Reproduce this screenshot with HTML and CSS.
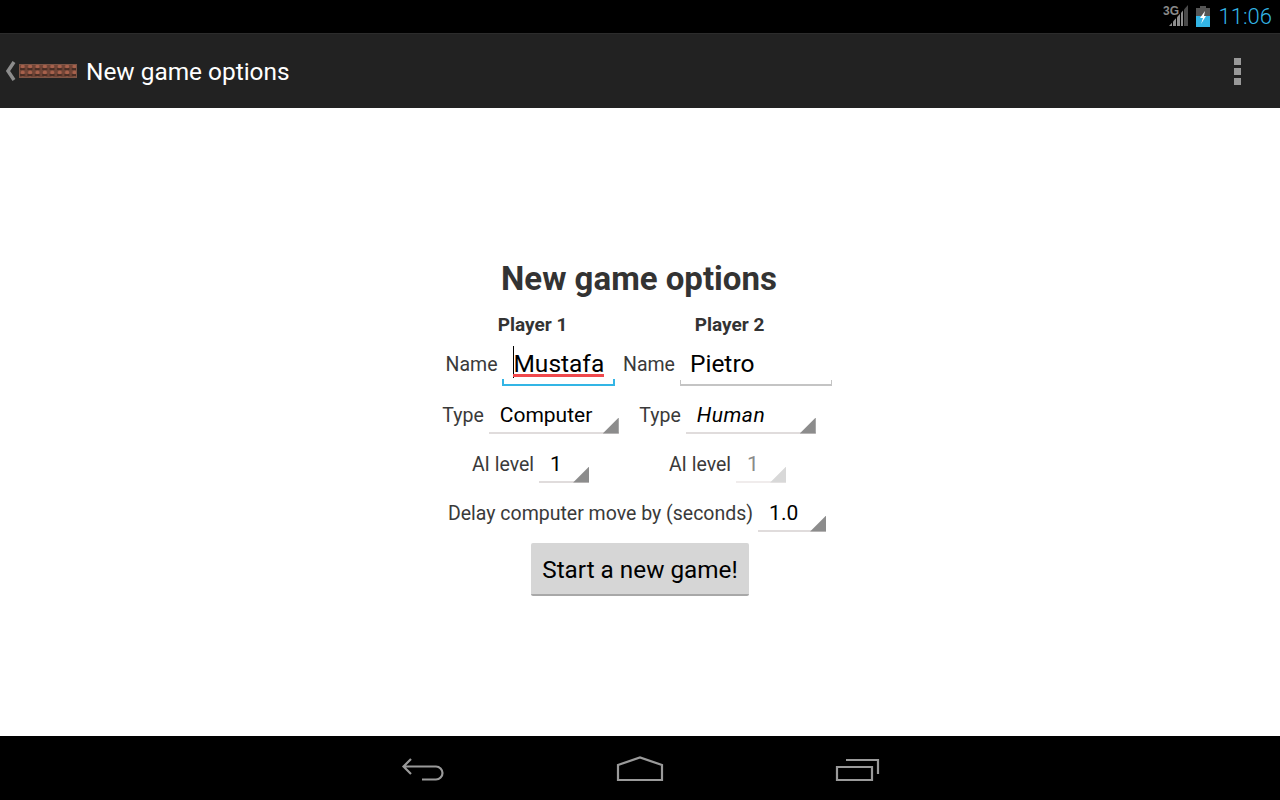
FILE: index.html
```html
<!DOCTYPE html>
<html lang="en">
<head>
    <meta charset="UTF-8">
    <title>New game options</title>
    <link rel="stylesheet" href="styles.css">
</head>
<body>
    <div class="status-bar">
        <svg class="signal-icon" width="26" height="25" viewBox="0 0 26 25">
            <text x="0" y="11" class="signal-label">3G</text>
            <polygon points="6,22 9,18.700 9,22" fill="#8f8f8f"/>
            <polygon points="10,22 10,17.600 13,14.300 13,22" fill="#8f8f8f"/>
            <polygon points="14,22 14,13.200 17,9.800 17,22" fill="#8f8f8f"/>
            <polygon points="18,22 18,8.700 20,6.500 20,22" fill="#8f8f8f"/>
            <polygon points="21,22 21,5.400 25,1 25,22" fill="#4a4a4a"/>
        </svg>
        <svg class="battery-icon" width="14" height="21" viewBox="0 0 14 21">
            <rect x="4" y="0" width="6" height="2" fill="#555"/>
            <rect x="0" y="2" width="14" height="8" fill="#555"/>
            <rect x="0" y="10" width="14" height="11" fill="#33b5e5"/>
            <polygon points="9,5 4,12 7,12 5,18 10,10 8,10" fill="#fff"/>
        </svg>
        <span class="clock">11:06</span>
    </div>

    <div class="action-bar">
        <svg class="up-icon" width="11" height="20" viewBox="0 0 11 20">
            <polyline points="9,1 3,10 9,19" fill="none" stroke="#8c8c8c" stroke-width="3.500"/>
        </svg>
        <svg class="brick-icon" width="58" height="14" viewBox="0 0 58 14">
            <defs>
                <pattern id="bricks" width="7.400" height="6" patternUnits="userSpaceOnUse">
                    <rect width="7.400" height="6" fill="#6f4436"/>
                    <circle cx="3.700" cy="2.400" r="2" fill="#a8614c"/>
                    <rect x="1" y="4.400" width="5" height="1.200" fill="#2d1d18"/>
                </pattern>
            </defs>
            <rect width="58" height="14" fill="#7d5546"/>
            <rect x="1" y="1" width="56" height="12" fill="url(#bricks)"/>
        </svg>
        <span class="action-title">New game options</span>
        <div class="overflow-menu">
            <span class="overflow-dot"></span>
            <span class="overflow-dot"></span>
            <span class="overflow-dot"></span>
        </div>
    </div>

    <div class="content">
        <h1 class="form-title">New game options</h1>

        <div class="players">
            <div class="player-head">Player 1</div>
            <div class="player-head">Player 2</div>

            <div class="field name-field">
                <label class="field-label">Name</label>
                <div class="text-input focused narrow">
                    <span class="typed"><span class="misspelled">Mustafa</span></span>
                </div>
            </div>
            <div class="field name-field">
                <label class="field-label">Name</label>
                <div class="text-input wide">Pietro</div>
            </div>

            <div class="field">
                <label class="field-label">Type</label>
                <div class="spinner type-spinner">Computer</div>
            </div>
            <div class="field">
                <label class="field-label">Type</label>
                <div class="spinner type-spinner human">Human</div>
            </div>

            <div class="field">
                <label class="field-label">AI level</label>
                <div class="spinner level-spinner">1</div>
            </div>
            <div class="field">
                <label class="field-label">AI level</label>
                <div class="spinner level-spinner disabled">1</div>
            </div>
        </div>

        <div class="field delay-field">
            <label class="field-label">Delay computer move by (seconds)</label>
            <div class="spinner delay-spinner">1.0</div>
        </div>

        <button class="start-button">Start a new game!</button>
    </div>

    <div class="nav-bar">
        <svg width="48" height="28" viewBox="0 0 48 28">
            <path d="M11 5 L3.500 12.500 L11 20 M3.500 12.500 H36 A6.500 6.500 0 0 1 36 25.500 H22" fill="none" stroke="#9a9a9a" stroke-width="2.200"/>
        </svg>
        <svg width="48" height="28" viewBox="0 0 48 28">
            <path d="M2 26 V11 L24 3.500 L46 11 V26 Z" fill="none" stroke="#9a9a9a" stroke-width="2.200"/>
        </svg>
        <svg width="48" height="28" viewBox="0 0 48 28">
            <path d="M14 6 H46 V20 M5 13 H40 V26 H5 Z" fill="none" stroke="#9a9a9a" stroke-width="2.200"/>
        </svg>
    </div>
</body>
</html>
```

FILE: styles.css
```css
body {
    margin: 0;
    width: 1280px;
    height: 800px;
    display: flex;
    flex-direction: column;
    overflow: hidden;
    background: #fff;
    font-family: Roboto, sans-serif;
}

/* Top bars */
.status-bar {
    height: 33px;
    background: #000;
    display: flex;
    align-items: center;
    justify-content: flex-end;
    padding-right: 8px;
    border-bottom: 1px solid #2c2c2c;
}

.signal-icon {
    margin-right: 7px;
}

.signal-label {
    font-family: "Liberation Sans", sans-serif;
    font-size: 12px;
    font-weight: 700;
    fill: #8a8a8a;
}

.battery-icon {
    margin-right: 9px;
    margin-top: -1px;
}

.clock {
    color: #33b5e5;
    font-size: 22px;
    font-weight: 300;
}

.action-bar {
    height: 74px;
    background: #222;
    display: flex;
    align-items: center;
    color: #fff;
}

.up-icon {
    margin-left: 5px;
}

.brick-icon {
    margin-left: 3px;
}

.action-title {
    margin-left: 9px;
    margin-top: 1px;
    font-size: 24.400px;
}

.overflow-menu {
    margin-left: auto;
    margin-right: 39px;
    display: flex;
    flex-direction: column;
    gap: 3px;
}

.overflow-dot {
    width: 7px;
    height: 7px;
    background: #999;
}

/* Form */
.content {
    flex: 1;
    display: flex;
    flex-direction: column;
    align-items: center;
    padding-top: 152px;
    color: #333;
}

.form-title {
    margin: 0 2px 0 0;
    font-size: 33px;
    font-weight: 700;
    line-height: 38px;
}

.players {
    display: grid;
    grid-template-columns: 185px 209px;
    margin-right: 10px;
    margin-top: 14px;
}

.player-head {
    font-size: 19px;
    font-weight: 700;
    text-align: center;
    height: 28px;
    line-height: 26px;
    padding-left: 4px;
}

.field {
    display: flex;
    align-items: center;
    justify-content: center;
    height: 49px;
}

.field-label {
    font-size: 19.500px;
    margin-right: 5px;
    margin-top: 2px;
    color: #3a3a3a;
}

.name-field {
    height: 50px;
}

.name-field .field-label {
    margin-top: -2px;
}

.text-input {
    position: relative;
    height: 42px;
    box-sizing: border-box;
    padding-left: 9px;
    line-height: 40px;
    font-size: 24.500px;
    color: #000;
    border-bottom: 2px solid #c4c4c4;
    border-left: 1px solid #c4c4c4;
    border-right: 1px solid #c4c4c4;
    border-image: linear-gradient(to top, #c4c4c4 5px, transparent 5px) 1;
}

.text-input.narrow {
    width: 113px;
}

.text-input.wide {
    width: 153px;
}

.text-input.focused {
    padding-left: 10px;
    border-left-width: 2px;
    border-right-width: 2px;
    border-image: linear-gradient(to top, #33b5e5 6px, transparent 6px) 1;
}

.typed {
    display: inline-block;
    height: 32px;
    line-height: 36px;
    border-left: 1px solid #000;
    margin-left: -1px;
}

.misspelled {
    display: inline-block;
    height: 28px;
    margin-left: -1px;
    border-bottom: 3px solid #f0484c;
}

.spinner {
    position: relative;
    box-sizing: border-box;
    height: 38px;
    padding-left: 11px;
    line-height: 38px;
    font-size: 21px;
    color: #000;
    border-bottom: 2px solid #e0dcdc;
}

.spinner::after {
    content: "";
    position: absolute;
    right: 0;
    bottom: -2px;
    width: 16px;
    height: 16px;
    background: #8c8c8c;
    clip-path: polygon(100% 0, 100% 100%, 0 100%);
}

.type-spinner {
    width: 130px;
}

.human {
    font-style: italic;
    letter-spacing: 0.500px;
}

.level-spinner {
    width: 50px;
}

.disabled {
    color: #8a8a8a;
    border-bottom-color: #f0ecec;
}

.disabled::after {
    background: #d8d8d8;
}

.delay-field {
    margin-right: 6px;
}

.delay-spinner {
    width: 68px;
}

.start-button {
    margin-top: 6px;
    width: 218px;
    height: 53px;
    border: none;
    border-bottom: 2px solid #a8a8a8;
    border-radius: 2px;
    background: #d6d6d6;
    color: #000;
    font-family: Roboto, sans-serif;
    font-size: 24.300px;
    padding: 1px 0 0;
}

/* Bottom navigation */
.nav-bar {
    height: 64px;
    background: #000;
    display: flex;
    align-items: center;
    justify-content: center;
    gap: 168px;
}
```
